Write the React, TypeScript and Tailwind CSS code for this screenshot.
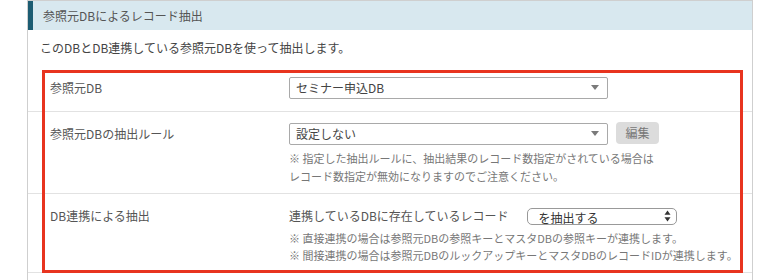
import React from 'react';

const font = { fontFamily: '"Noto Sans CJK JP", "Noto Sans", sans-serif' };

function Caret() {
  return (
    <svg width="8" height="6" viewBox="0 0 8 6" className="shrink-0">
      <path d="M0 0 H8 L4 5 Z" fill="#7a7a7a" />
    </svg>
  );
}

function UpDown() {
  return (
    <svg width="7" height="12" viewBox="0 0 7 12" className="shrink-0">
      <path d="M3.5 0.5 L6.5 4.8 H0.5 Z" fill="#333" />
      <path d="M3.5 11.5 L6.5 7.2 H0.5 Z" fill="#333" />
    </svg>
  );
}

function SelectBox({ value }: { value: string }) {
  return (
    <div className="w-[319px] h-[22px] border border-[#a9a9a9] rounded-[2px] bg-white flex items-center justify-between pl-[6px] pr-[8px]">
      <span className="text-[12px] text-[#444] leading-none">{value}</span>
      <Caret />
    </div>
  );
}

export default function App() {
  return (
    <div className="w-[780px] h-[280px] bg-white relative overflow-hidden" style={font}>
      <div className="ml-[27px] w-[726px] border border-[#cfcfcf] pb-[20px]">
        <div className="h-[29px] bg-[#d8e8ef] border-l-[5px] border-[#1c5c72] flex items-center pl-[10px]">
          <span className="text-[12px] text-[#555]">参照元DBによるレコード抽出</span>
        </div>

        <p className="pl-[12px] pt-[9px] pb-[8px] text-[12px] leading-[18px] text-[#444]">
          このDBとDB連携している参照元DBを使って抽出します。
        </p>

        <div className="flex pl-[22px] py-[12px] border-b border-[#e2e2e2]">
          <div className="w-[239px] text-[12px] leading-[22px] text-[#555]">参照元DB</div>
          <SelectBox value="セミナー申込DB" />
        </div>

        <div className="flex pl-[22px] pt-[11px] pb-[8px] border-b border-[#e2e2e2]">
          <div className="w-[239px] text-[12px] leading-[22px] text-[#555]">参照元DBの抽出ルール</div>
          <div>
            <div className="flex gap-[8px]">
              <SelectBox value="設定しない" />
              <button className="h-[22px] w-[43px] rounded-[4px] bg-[#dcdcdc] text-[12px] text-[#777] leading-none -mt-[1px]">
                編集
              </button>
            </div>
            <div className="mt-[4px] text-[11px] leading-[18px] text-[#777]">
              <p>※ 指定した抽出ルールに、抽出結果のレコード数指定がされている場合は</p>
              <p>レコード数指定が無効になりますのでご注意ください。</p>
            </div>
          </div>
        </div>

        <div className="flex pl-[22px] pt-[11px] pb-[8px] border-b border-[#e2e2e2]">
          <div className="w-[239px] text-[12px] leading-[22px] text-[#555]">DB連携による抽出</div>
          <div>
            <div className="flex items-center h-[22px]">
              <span className="text-[12px] text-[#555]">連携しているDBに存在しているレコード</span>
              <div className="ml-[19px] w-[150px] h-[17px] border border-[#999] rounded-[5px] bg-white flex justify-between pl-[10px] pr-[5px] overflow-hidden">
                <span className="text-[12px] text-[#333] leading-[12px] pt-[3px]">を抽出する</span>
                <div className="pt-[1px]">
                  <UpDown />
                </div>
              </div>
            </div>
            <div className="mt-[3px] text-[11px] leading-[17px] text-[#777]">
              <p>※ 直接連携の場合は参照元DBの参照キーとマスタDBの参照キーが連携します。</p>
              <p>※ 間接連携の場合は参照元DBのルックアップキーとマスタDBのレコードIDが連携します。</p>
            </div>
          </div>
        </div>
      </div>

      <div className="absolute left-[42px] top-[70px] w-[701px] h-[203px] border-[3px] border-[#e8341f]" />
    </div>
  );
}
